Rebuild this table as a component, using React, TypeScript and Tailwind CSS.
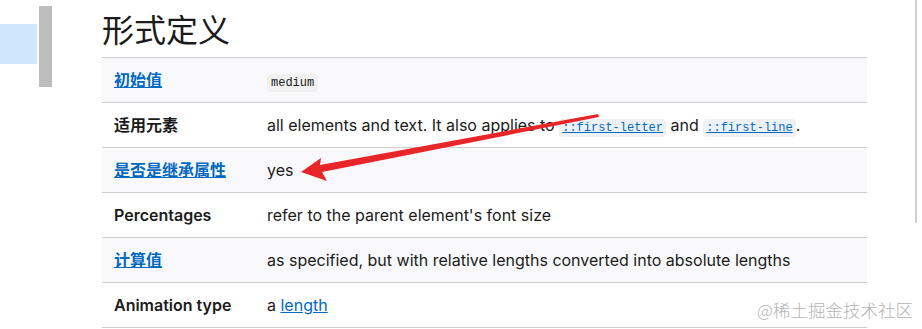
const rows = [
  { head: '初始值', link: true, value: 'medium' },
  { head: '适用元素', link: false, value: 'applies' },
  { head: '是否是继承属性', link: true, value: 'yes' },
  { head: 'Percentages', link: false, value: 'refer' },
  { head: '计算值', link: true, value: 'computed' },
  { head: 'Animation type', link: false, value: 'anim' },
];

const Code = ({ children, href }: { children: string; href?: boolean }) => (
  <code
    className={
      href
        ? "rounded-[4px] bg-[#eef1f5] px-[3px] py-[2px] font-['Liberation_Mono',monospace] text-[12px] text-[#0069c2] underline"
        : "rounded-[4px] bg-[#f2f1f1] px-[4px] py-[2px] font-['Liberation_Mono',monospace] text-[12px] text-[#1b1b1b]"
    }
  >
    {children}
  </code>
);

const Value = ({ kind }: { kind: string }) => {
  if (kind === 'medium') return <Code>medium</Code>;
  if (kind === 'applies')
    return (
      <span>
        all elements and text. It also applies to <Code href>::first-letter</Code> and <Code href>::first-line</Code>.
      </span>
    );
  if (kind === 'yes') return <span>yes</span>;
  if (kind === 'refer') return <span>refer to the parent element's font size</span>;
  if (kind === 'computed') return <span>as specified, but with relative lengths converted into absolute lengths</span>;
  return (
    <span>
      a <a className="text-[#0069c2] underline">length</a>
    </span>
  );
};

const App = () => {
  return (
    <div className="relative flex h-[329px] w-[922px] overflow-hidden bg-white font-['Inter','Noto_Sans_CJK_SC',sans-serif] text-[#1b1b1b]">
      {/* sidebar edge */}
      <div className="mt-[24px] h-[40px] w-[37px] bg-[#cfe6fb]" />
      <div className="ml-[2px] mt-[6px] h-[81px] w-[13px] bg-[#bdbdbd]" />

      <div className="ml-[50px] w-[765px]">
        <h2 className="mt-[8px] h-[40px] font-['Noto_Sans_CJK_SC',sans-serif] text-[32px] leading-[40px] font-normal text-[#1b1b1b]">
          形式定义
        </h2>
        <div className="mt-[9px] border-t border-[#cdcdcd]">
          {rows.map((r, i) => (
            <div
              key={r.head}
              className={`flex h-[45px] items-center border-b border-[#cdcdcd] text-[16px] ${i % 2 === 0 ? 'bg-[#f9f9fb]' : 'bg-white'}`}
            >
              <div className="w-[153px] pl-[12px]">
                {r.link ? (
                  <a className="font-bold text-[#0069c2] underline">{r.head}</a>
                ) : (
                  <span className="font-semibold">{r.head}</span>
                )}
              </div>
              <div className="pl-[12px]">
                <Value kind={r.value} />
              </div>
            </div>
          ))}
        </div>
      </div>

      {/* scroll track */}
      <div className="ml-[48px] h-[223px] w-[2px] bg-[#cfcfcf]" />

      {/* annotation arrow */}
      <svg className="absolute left-0 top-0" width="922" height="329" viewBox="0 0 922 329">
        <polygon points="598,114 599,117 322,172 327,181 301,172 321,158 320,165" fill="#e8262a" />
      </svg>

      <div className="absolute left-[757px] top-[298px] font-['Noto_Sans_CJK_SC',sans-serif] text-[17.5px] font-light leading-[24px] text-[#b4b4b4]">
        @稀土掘金技术社区
      </div>
    </div>
  );
};

export default App;
